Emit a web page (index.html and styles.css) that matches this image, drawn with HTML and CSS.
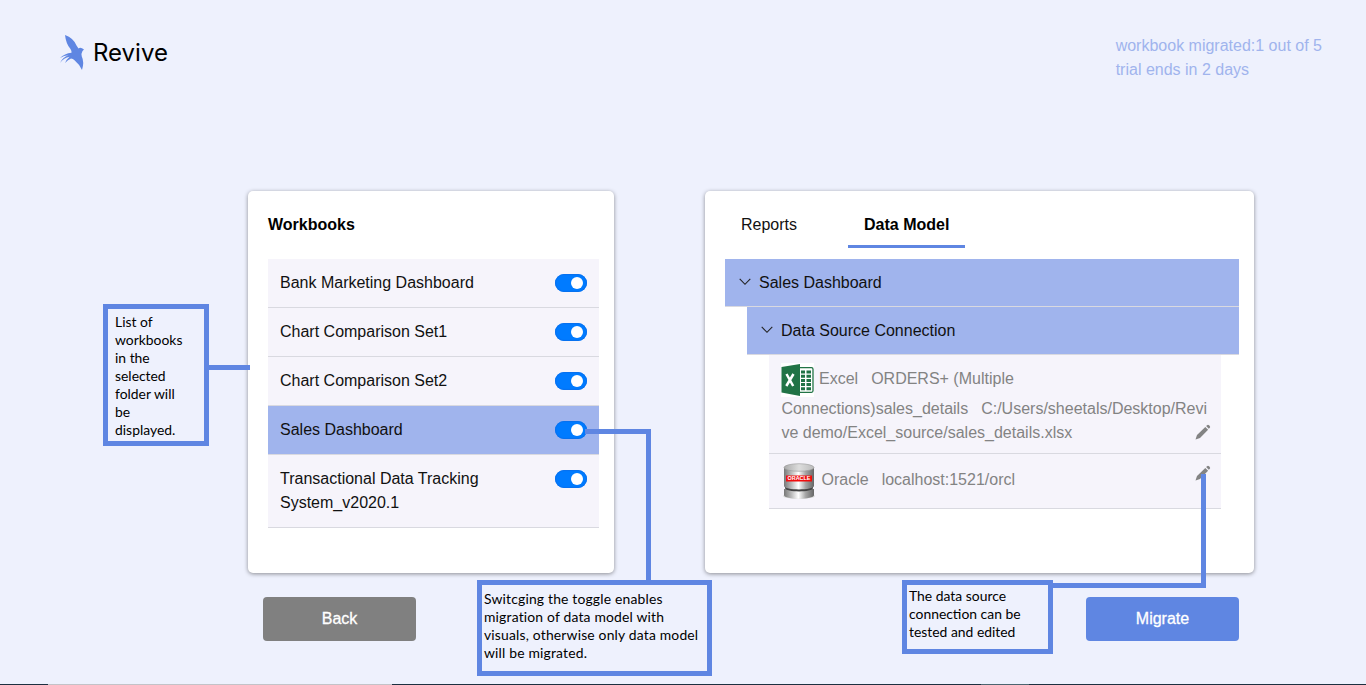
FILE: index.html
```html
<!DOCTYPE html>
<html lang="en">
<head>
<meta charset="utf-8">
<title>Revive</title>
<link rel="stylesheet" href="styles.css">
</head>
<body>
<div class="page">
  <header class="header">
    <div class="brand">
      <svg class="bird" viewBox="0 0 26 36" width="26" height="36"><path fill="#5f86e2" d="M5 0Q13.500 3 16.500 10.500L18.500 13.500Q20 12 22 13.200L24 14.500 22.500 16Q21 18.500 21.800 21.500Q24.500 27 22 35Q19 29 14.500 25.300Q13 23.700 11 23.500Q8 24.500 5 28Q6.500 24.500 9.500 21.800Q4 22.500 0 28Q2.500 22.300 8.500 20.300Q4 20.500 0 23Q4.500 18.500 11.500 17.800Q12 16.500 10.500 14Q6 9 5 0Z"/></svg>
      <span class="brand-name">Revive</span>
    </div>
    <div class="trial">workbook migrated:1 out of 5<br>trial ends in 2 days</div>
  </header>

  <main class="panels">
    <section class="panel workbooks">
      <h2 class="title">Workbooks</h2>
      <ul class="list">
        <li class="row"><span>Bank Marketing Dashboard</span><i class="toggle"></i></li>
        <li class="row"><span>Chart Comparison Set1</span><i class="toggle"></i></li>
        <li class="row"><span>Chart Comparison Set2</span><i class="toggle"></i></li>
        <li class="row selected"><span>Sales Dashboard</span><i class="toggle"></i></li>
        <li class="row"><span>Transactional Data Tracking<br>System_v2020.1</span><i class="toggle"></i></li>
      </ul>
    </section>

    <section class="panel model">
      <nav class="tabs">
        <span class="tab">Reports</span>
        <span class="tab active">Data Model</span>
      </nav>
      <div class="node"><svg class="chevron" width="12" height="8" viewBox="0 0 12 8"><path d="M.7.800 6 6.300 11.300.800"/></svg>Sales Dashboard</div>
      <div class="node child"><svg class="chevron" width="12" height="8" viewBox="0 0 12 8"><path d="M.7.800 6 6.300 11.300.800"/></svg>Data Source Connection</div>
      <div class="sources">
        <div class="source excel">
          <div class="source-first">
            <svg width="33" height="34" viewBox="0 0 33 34">
              <path fill="#fff" d="M0 0h33v34H0z"/>
              <path fill="#fff" stroke="#217346" stroke-width="1.300" d="M18 4.700h12.500q1.500 0 1.500 1.500v21.600q0 1.500-1.500 1.500H18z"/>
              <path fill="#217346" d="M20 7.500h4v3h-4zm5.500 0h4.500v3h-4.500zM20 11.700h4v3h-4zm5.500 0h4.500v3h-4.500zM20 15.900h4v3h-4zm5.500 0h4.500v3h-4.500zM20 20.100h4v3h-4zm5.500 0h4.500v3h-4.500zM20 24.300h4v3h-4zm5.500 0h4.500v3h-4.500zM.5 4 19 1v32L.5 29.600z"/>
              <path stroke="#fff" stroke-width="2.500" d="m5.500 11 6.700 12M12.500 11 5.300 23"/>
            </svg>
            <span class="kind">Excel</span><span>ORDERS+ (Multiple</span>
          </div>
          <div class="source-line"><span class="detail">Connections)sales_details</span><span>C:/Users/sheetals/Desktop/Revi</span></div>
          <div class="source-line split"><span>ve demo/Excel_source/sales_details.xlsx</span>
            <svg class="pencil" width="16" height="16" viewBox="0 0 16 16"><path d="M.5 15.500 2 11 10.300 2.900 13.100 5.700 5 13.900zM11.100 2.100l1-.9q.9-.9 2 .1l.6.600q1 1 .1 1.900l-1 1z"/></svg></div>
        </div>
        <div class="source oracle">
          <svg class="database" width="34" height="38" viewBox="0 0 34 38">
            <defs>
              <linearGradient id="metal"><stop offset="0" stop-color="#777"/><stop offset=".25" stop-color="#bbb"/><stop offset=".48" stop-color="#fff"/><stop offset=".72" stop-color="#a5a5a5"/><stop offset="1" stop-color="#666"/></linearGradient>
              <linearGradient id="lid"><stop offset="0" stop-color="#aaa"/><stop offset=".5" stop-color="#ddd"/><stop offset="1" stop-color="#bbb"/></linearGradient>
            </defs>
            <ellipse cx="18" cy="34" rx="16" ry="3" fill="#ddd"/>
            <path fill="url(#metal)" d="M3 27v6c0 5 30 5 30 0v-6z"/>
            <path fill="#444" d="M4 24v2c0 4.500 28 4.500 28 0v-2z"/>
            <path fill="url(#metal)" d="M3 5.500V24c0 4.500 30 4.500 30 0V5.500z"/>
            <ellipse cx="18" cy="5.500" rx="15" ry="3.800" fill="url(#lid)" stroke="#999" stroke-width=".6"/>
            <path fill="#f00d0d" d="M5 13.500h26v6H5z"/>
            <text class="oracle-mark" x="18" y="18.100" text-anchor="middle" textLength="23" lengthAdjust="spacingAndGlyphs">ORACLE</text>
          </svg>
          <span class="kind">Oracle</span><span>localhost:1521/orcl</span>
          <svg class="pencil" width="16" height="16" viewBox="0 0 16 16"><path d="M.5 15.500 2 11 10.300 2.900 13.100 5.700 5 13.900zM11.100 2.100l1-.9q.9-.9 2 .1l.6.600q1 1 .1 1.900l-1 1z"/></svg>
        </div>
      </div>
    </section>
  </main>

  <div class="actions">
    <button class="button back">Back</button>
    <button class="button migrate">Migrate</button>
  </div>

  <svg class="connectors" width="1366" height="685" viewBox="0 0 1366 685">
    <path d="M208 367.500H250M585 431.500H648.500V583M1203.500 474V585.500H1052"/>
  </svg>
  <aside class="note note-list">List of<br>workbooks<br>in the<br>selected<br>folder will<br>be<br>displayed.</aside>
  <aside class="note note-toggle">Switcging the toggle enables<br>migration of data model with<br>visuals, otherwise only data model<br>will be migrated.</aside>
  <aside class="note note-source">The data source<br>connection can be<br>tested and edited</aside>
  <div class="edge"></div>
</div>
</body>
</html>
```

FILE: styles.css
```css
* { box-sizing: border-box; }
body {
  margin: 0;
  background: #eef1fd;
  color: #111;
  font: 16px/24px "Liberation Sans", Arial, sans-serif;
}
.page { position: relative; height: 685px; overflow: hidden; }
.header {
  display: flex;
  justify-content: space-between;
  height: 191px;
  padding: 34px 44px 0 60px;
}
.brand { display: flex; align-items: flex-start; gap: 7px; }
.bird { margin-top: 1px; }
.brand-name {
  margin-top: 1px;
  font: 24px/36px Inter, sans-serif;
  color: #000;
}
.trial { color: #a0b4ed; white-space: nowrap; }
.panels { display: flex; gap: 91px; padding-left: 248px; }
.panel {
  height: 382px;
  padding: 22px 15px 0 20px;
  background: #fff;
  border-radius: 5px;
  box-shadow: 0 1px 4px rgba(0, 0, 0, .42);
}
.workbooks { width: 366px; }
.model { width: 549px; }
.title { margin: 0 0 22px; font-size: 16px; line-height: 24px; color: #000; }
.list { margin: 0; padding: 0; list-style: none; }
.row {
  display: flex;
  justify-content: space-between;
  padding: 12px;
  background: #f6f4fb;
  border-bottom: 1px solid #d9d9e0;
}
.row.selected { background: #a0b4ed; }
.toggle {
  width: 32px;
  height: 18px;
  margin-top: 3px;
  padding: 3px 4px 3px 16px;
  border-radius: 9px;
  background: #007bff;
  box-shadow: inset 0 0 1px 1px #0870ee;
}
.toggle::before {
  content: "";
  display: block;
  width: 12px;
  height: 12px;
  border-radius: 50%;
  background: #fff;
}
.tabs { display: flex; gap: 35px; height: 46px; }
.tab { height: 35px; padding: 0 16px; }
.active { font-weight: bold; color: #000; border-bottom: 3px solid #5f86e2; }
.node {
  display: flex;
  align-items: center;
  gap: 8px;
  height: 48px;
  padding-left: 14px;
  background: #a0b4ed;
  border-bottom: 1px solid #d9d9e0;
}
.child { margin-left: 22px; }
.chevron { margin-bottom: 1px; fill: none; stroke: #222; stroke-width: 1.1; }
.sources { margin: 0 18px 0 44px; color: #838383; }
.source { padding: 0 10px 0 12px; background: #f6f4fb; border-bottom: 1px solid #d9d9e0; }
.excel { height: 99px; padding-top: 8px; }
.source-first { display: flex; height: 34px; }
.source-first .kind { margin-left: 5px; }
.source-first span { margin-top: 4px; }
.kind { margin-right: 13px; }
.source-line { height: 24px; padding-left: .4px; white-space: nowrap; }
.detail { margin-right: 13px; }
.split { display: flex; justify-content: space-between; }
.pencil { fill: #838383; }
.split .pencil { margin-top: 3px; }
.oracle { display: flex; height: 55px; padding-top: 8px; }
.oracle > span { margin-top: 6px; }
.oracle .kind { margin-left: 6.5px; }
.oracle .pencil { margin: 3px 0 0 auto; }
.oracle-mark { fill: #fff; font: bold 4.5px "Liberation Sans", sans-serif; }
.actions { display: flex; justify-content: space-between; padding: 24px 127px 0 263px; }
.button {
  width: 153px;
  height: 44px;
  padding: 0;
  border: 0;
  border-radius: 4px;
  color: #fff;
  font: 16px/24px "Liberation Sans", Arial, sans-serif;
  -webkit-text-stroke: .3px #fff;
}
.back { background: #808080; }
.migrate { background: #5f86e2; }
.connectors { position: absolute; left: 0; top: 0; fill: none; stroke: #5f86e2; stroke-width: 5; }
.note {
  position: absolute;
  border: 5px solid #5f86e2;
  color: #000;
  font: 13.9px/18px Lato, sans-serif;
  white-space: nowrap;
}
.note-list { left: 103px; top: 304px; width: 106px; height: 142px; padding: 4px 0 0 7px; }
.note-toggle { left: 477px; top: 580px; width: 235px; height: 96px; padding: 5px 0 0 2px; letter-spacing: .18px; }
.note-source { left: 902px; top: 580px; width: 151px; height: 74px; padding: 2px 0 0 2px; }
.edge {
  position: absolute;
  left: 0;
  bottom: 0;
  width: 100%;
  height: 1px;
  background: linear-gradient(90deg, #1c3040 48px, #c3c3c8 48px 392px, #1c3040 392px 981px, #4c6570 981px 1029px, #1c3040 1029px);
}
```
